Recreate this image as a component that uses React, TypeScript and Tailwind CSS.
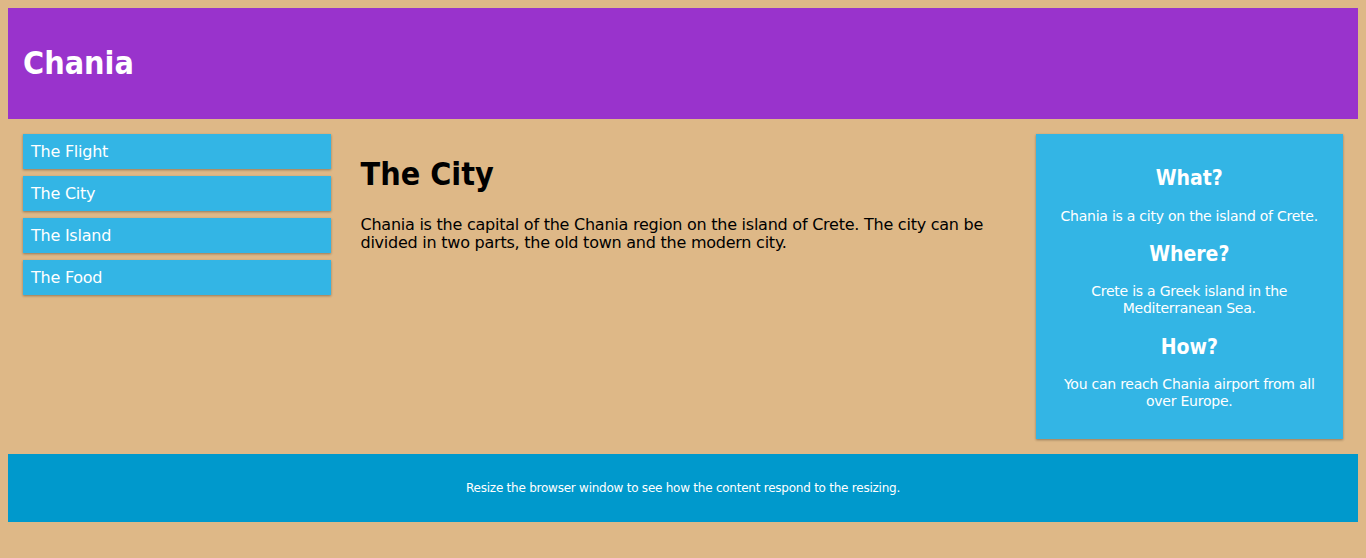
import React from 'react'

const menu = ['The Flight', 'The City', 'The Island', 'The Food']

export default function App() {
    return (
        <div className="min-h-screen bg-[#deb887] p-2 font-[family-name:DejaVu_Sans,sans-serif] text-base leading-normal tracking-[-0.015em] text-black">
            {/* Header */}
            <div className="bg-[#9933cc] p-[15px] text-white">
                <h1 className="my-[21.44px] font-[family-name:DejaVu_Sans_Condensed,DejaVu_Sans,sans-serif] text-[32px] font-bold leading-[38px] tracking-normal">
                    Chania
                </h1>
            </div>

            <div className="flex">
                {/* Menu */}
                <div className="w-1/4 p-[15px]">
                    <ul>
                        {menu.map((m) => (
                            <li
                                key={m}
                                className="mb-[7px] bg-[#33b5e5] p-2 leading-[19px] text-white shadow-[0_1px_3px_rgba(0,0,0,0.12),0_1px_2px_rgba(0,0,0,0.24)]"
                            >
                                {m}
                            </li>
                        ))}
                    </ul>
                </div>

                {/* Main content */}
                <div className="w-1/2 p-[15px]">
                    <h1 className="mt-[22px] mb-[23px] font-[family-name:DejaVu_Sans_Condensed,DejaVu_Sans,sans-serif] text-[32px] font-bold leading-[37px] tracking-normal">
                        The City
                    </h1>
                    <p className="mb-4 leading-[18px]">
                        Chania is the capital of the Chania region on the island of Crete. The city can be divided in two parts, the old town and the modern city.
                    </p>
                </div>

                {/* Aside */}
                <div className="w-1/4 p-[15px]">
                    <div className="bg-[#33b5e5] p-[15px] text-center text-[14px] leading-[17px] text-white shadow-[0_1px_3px_rgba(0,0,0,0.12),0_1px_2px_rgba(0,0,0,0.24)]">
                        <h2 className="my-[17.4px] font-[family-name:DejaVu_Sans_Condensed,DejaVu_Sans,sans-serif] text-[21px] font-bold leading-[24px] tracking-normal">What?</h2>
                        <p className="my-[14px]">Chania is a city on the island of Crete.</p>
                        <h2 className="my-[17.4px] font-[family-name:DejaVu_Sans_Condensed,DejaVu_Sans,sans-serif] text-[21px] font-bold leading-[24px] tracking-normal">Where?</h2>
                        <p className="my-[14px]">Crete is a Greek island in the Mediterranean Sea.</p>
                        <h2 className="my-[17.4px] font-[family-name:DejaVu_Sans_Condensed,DejaVu_Sans,sans-serif] text-[21px] font-bold leading-[24px] tracking-normal">How?</h2>
                        <p className="my-[14px]">You can reach Chania airport from all over Europe.</p>
                    </div>
                </div>
            </div>

            {/* Footer */}
            <div className="bg-[#0099cc] p-[15px] text-center text-[12px] leading-[14px] text-white">
                <p className="my-3">Resize the browser window to see how the content respond to the resizing.</p>
            </div>
        </div>
    )
}
